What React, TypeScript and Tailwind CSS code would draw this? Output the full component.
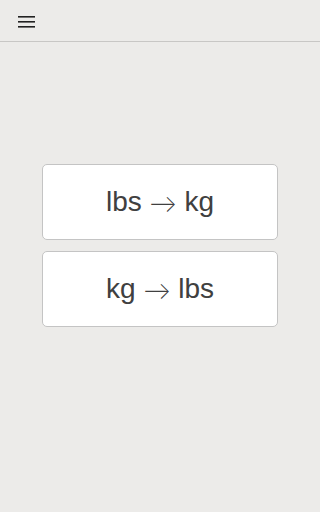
import React from 'react';

const conversions = [
  ['lbs', 'kg'],
  ['kg', 'lbs'],
];

function MenuIcon() {
  return (
    <svg width="17" height="12" viewBox="0 0 17 12" className="block">
      <rect x="0" y="0" width="17" height="1.6" fill="#222" />
      <rect x="0" y="5" width="17" height="1.6" fill="#222" />
      <rect x="0" y="10" width="17" height="1.6" fill="#222" />
    </svg>
  );
}

export default function App() {
  return (
    <div className="min-h-screen bg-[#ecebe9] font-['Liberation_Sans',Arial,sans-serif]">
      <header className="h-[42px] border-b border-[#c8c7c5] flex items-center pl-[18px]">
        <button className="pt-[3px]">
          <MenuIcon />
        </button>
      </header>
      <main className="pt-[122px] px-[42px] flex flex-col gap-[11px]">
        {conversions.map(([from, to]) => (
          <button
            key={from}
            className="h-[76px] w-full bg-white border border-[#c4c4c4] rounded-[5px] text-[28px] text-[#404040] flex items-center justify-center"
          >
            <span>
              {from}{' '}
              <span className="relative top-[2px] font-['Lato',sans-serif] font-light text-[27px]">→</span>{' '}
              {to}
            </span>
          </button>
        ))}
      </main>
    </div>
  );
}
